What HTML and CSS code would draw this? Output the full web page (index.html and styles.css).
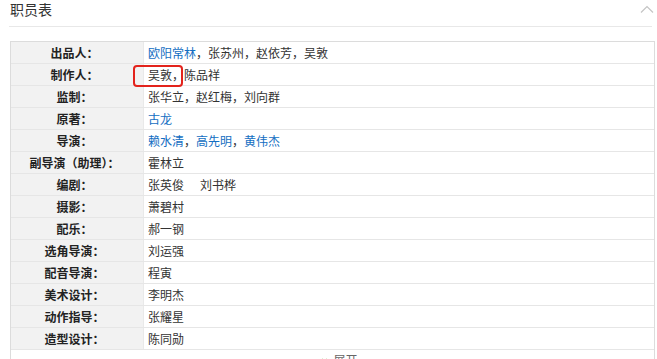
FILE: index.html
```html
<!DOCTYPE html>
<html lang="zh-CN">
<head>
<meta charset="utf-8">
<link rel="stylesheet" href="styles.css">
</head>
<body>
<div class="page">
  <div class="head">
    <span class="title">职员表</span>
    <svg class="chev" width="14" height="9" viewBox="0 0 14 9"><path d="M1 7.5 L7 1.5 L13 7.5" fill="none" stroke="#c4c4c4" stroke-width="1.2"/></svg>
  </div>
  <div class="table">
    <div class="row"><div class="lab">出品人：</div><div class="val"><a class="lnk">欧阳常林</a>，张苏州，赵依芳，吴敦</div></div>
    <div class="row"><div class="lab">制作人：</div><div class="val">吴敦，陈品祥</div></div>
    <div class="row"><div class="lab">监制：</div><div class="val">张华立，赵红梅，刘向群</div></div>
    <div class="row"><div class="lab">原著：</div><div class="val"><a class="lnk">古龙</a></div></div>
    <div class="row"><div class="lab">导演：</div><div class="val"><a class="lnk">赖水清</a>，<a class="lnk">高先明</a>，<a class="lnk">黄伟杰</a></div></div>
    <div class="row"><div class="lab">副导演（助理）：</div><div class="val">霍林立</div></div>
    <div class="row"><div class="lab">编剧：</div><div class="val">张英俊<span class="gap"></span>刘书桦</div></div>
    <div class="row"><div class="lab">摄影：</div><div class="val">萧碧村</div></div>
    <div class="row"><div class="lab">配乐：</div><div class="val">郝一钢</div></div>
    <div class="row"><div class="lab">选角导演：</div><div class="val">刘运强</div></div>
    <div class="row"><div class="lab">配音导演：</div><div class="val">程寅</div></div>
    <div class="row"><div class="lab">美术设计：</div><div class="val">李明杰</div></div>
    <div class="row"><div class="lab">动作指导：</div><div class="val">张耀星</div></div>
    <div class="row"><div class="lab">造型设计：</div><div class="val">陈同勋</div></div>
    <div class="more">
      <svg class="dchev" width="7" height="7" viewBox="0 0 7 7"><path d="M1 1 L3.5 3 L6 1 M1 4 L3.5 6 L6 4" fill="none" stroke="#7cc35a" stroke-width="1.2"/></svg>
      <span>展开</span>
    </div>
  </div>
  <div class="mark"></div>
</div>
</body>
</html>
```
FILE: styles.css
```css
html, body {
  margin: 0;
  padding: 0;
  background: #fff;
}
body {
  font-family: "Noto Sans CJK SC", "Liberation Sans", sans-serif;
  color: #333;
  font-size: 12px;
}
.page {
  position: relative;
  width: 657px;
  height: 359px;
  overflow: hidden;
}
.head {
  margin-left: 9px;
  width: 643px;
  height: 27px;
  border-bottom: 1px solid #e8e8e8;
  display: flex;
  justify-content: space-between;
  align-items: flex-start;
  box-sizing: border-box;
}
.title {
  font-size: 14px;
  line-height: 18px;
  color: #333;
  margin-left: 1px;
}
.chev {
  margin-top: 5px;
  margin-right: -2px;
}
.table {
  margin-top: 14px;
  margin-left: 10px;
  width: 645px;
  border: 1px solid #dcdcdc;
  box-sizing: border-box;
}
.row {
  display: flex;
  height: 22px;
  border-bottom: 1px solid #e6e6e6;
  box-sizing: border-box;
}
.lab {
  width: 133px;
  background: #f2f2f2;
  border-right: 1px solid #e9e9e9;
  font-weight: 700;
  text-align: center;
  padding-right: 5px;
  box-sizing: border-box;
  line-height: 21px;
  color: #222;
  flex: none;
}
.val {
  padding-left: 4px;
  line-height: 21px;
  color: #333;
}
.gap {
  display: inline-block;
  width: 16px;
}
.lnk {
  color: #136ec2;
  text-decoration: none;
}
.more {
  height: 16px;
  display: flex;
  align-items: center;
  justify-content: center;
  gap: 5px;
  color: #666;
  padding-left: 14px;
  padding-top: 2px;
  line-height: 16px;
}
.dchev {
  margin-top: 3px;
}
.mark {
  position: absolute;
  left: 133px;
  top: 65px;
  width: 50px;
  height: 22px;
  border: 2px solid #e3231c;
  border-radius: 4px;
  box-sizing: border-box;
}
```
